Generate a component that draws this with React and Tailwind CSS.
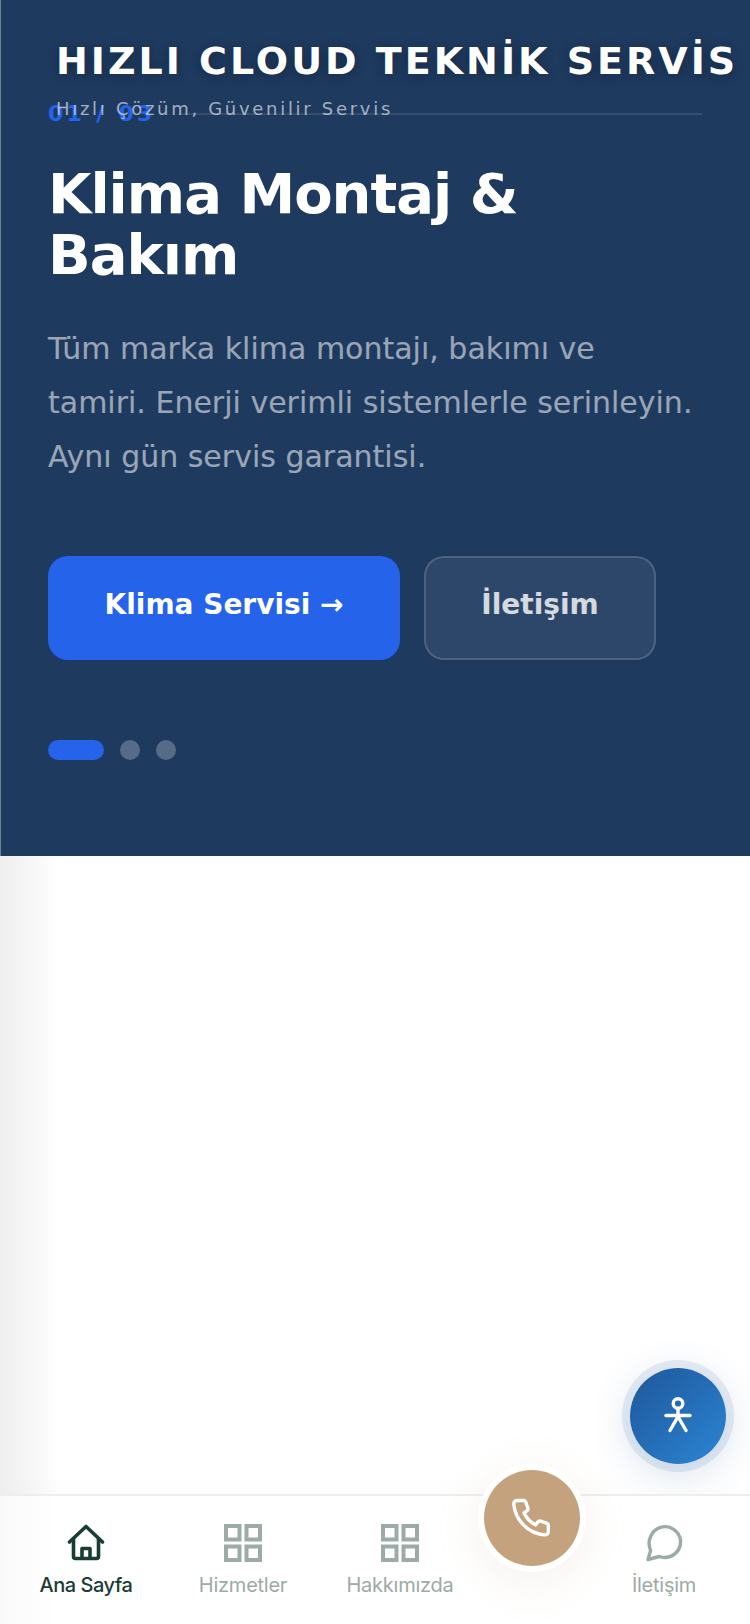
import React from "react";

const dejavu = "font-['DejaVu_Sans',sans-serif]";

function HomeIcon() {
  return (
    <svg width="38" height="38" viewBox="0 0 38 38" fill="none" stroke="#1a3c34" strokeWidth="3.600" strokeLinejoin="round" strokeLinecap="round">
      <path d="M2.500 18 19 2.500 35.500 18" />
      <path d="M6.500 15v17.500a2 2 0 0 0 2 2h21a2 2 0 0 0 2-2V15" />
      <path d="M15 34V24.500h8V34" />
    </svg>
  );
}

function GridIcon() {
  return (
    <svg width="38" height="38" viewBox="0 0 38 38" fill="none" stroke="#9caba5" strokeWidth="4">
      <rect x="2" y="2" width="13.500" height="13.500" />
      <rect x="22.500" y="2" width="13.500" height="13.500" />
      <rect x="2" y="22.500" width="13.500" height="13.500" />
      <rect x="22.500" y="22.500" width="13.500" height="13.500" />
    </svg>
  );
}

function ChatIcon() {
  return (
    <svg width="38" height="38" viewBox="0 0 38 38" fill="none" stroke="#9caba5" strokeWidth="3.400" strokeLinejoin="round">
      <path d="M3 35.500 5.600 26.400C1.600 17.500 6 6.500 15.500 3.400 25 .500 34.500 7 35.500 16.500 36.300 27.500 25.500 36.500 14.500 32.500L3 35.500Z" />
    </svg>
  );
}

function PhoneIcon() {
  return (
    <svg width="42" height="42" viewBox="0 0 42 42" fill="none" stroke="#fff" strokeWidth="3.400" strokeLinejoin="round" strokeLinecap="round">
      <path d="M6 3.500h6.500c1.200 0 2 .700 2.400 1.800l2 6c.300 1-.100 2-1 2.600l-2.800 2c2.400 5 6.500 9.400 11.500 12l2.200-2.800c.700-.900 1.700-1.200 2.700-.900l6 2c1.100.400 1.800 1.300 1.800 2.400v6c0 2-1.500 3.400-3.400 3.300C17 36.500 4 23 2.800 7.200 2.700 5 4 3.500 6 3.500Z" />
    </svg>
  );
}

function PersonIcon() {
  return (
    <svg width="28" height="38" viewBox="0 0 28 38" fill="none" stroke="#fff" strokeWidth="3.400" strokeLinecap="round">
      <circle cx="14" cy="6.500" r="4.800" />
      <path d="M2 18.500h24" />
      <path d="M14 11.500v8L6 33.500" />
      <path d="M14 19.500l8 14" />
    </svg>
  );
}

function NavItem({ icon, label, active }) {
  return (
    <div className="flex w-[150px] flex-col items-center">
      <div className="flex h-[38px] items-center justify-center">{icon}</div>
      <span className={`mt-[9px] font-['Inter',sans-serif] text-[20px] leading-[28px] ${active ? "font-medium tracking-[-0.500px] text-[#1a3c34]" : "tracking-[-0.250px] text-[#9caba5]"}`}>
        {label}
      </span>
    </div>
  );
}

export default function App() {
  return (
    <div className={`relative flex h-[1624px] w-[750px] flex-col overflow-hidden bg-white ${dejavu}`}>
      <section className="relative h-[856px] shrink-0 border-l border-l-[#6f7f95] bg-[#1e3a5f] pl-[47px]">
        {/* Brand header sits over the slide */}
        <header className="absolute left-[55px] top-[36px] whitespace-nowrap">
          <div className="text-[38px] font-bold leading-[50px] tracking-[3px] text-white [text-shadow:0_2px_12px_rgba(0,0,0,0.3)]">
            HIZLI CLOUD TEKNİK SERVİS
          </div>
          <div className="mt-[12px] text-[18px] leading-[22px] tracking-[2.700px] text-white/60">
            Hızlı Çözüm, Güvenilir Servis
          </div>
        </header>

        <div className="flex items-center gap-[22px] pr-[48px] pt-[100px]">
          <span className="text-[22px] font-bold leading-[28px] tracking-[3.300px] text-[#2563eb]">
            01 / 03
          </span>
          <div className="h-[2px] flex-1 bg-white/10" />
        </div>

        <h1 className="mt-[35px] text-[56px] font-bold leading-[61px] tracking-[-1px] text-white">
          Klima Montaj &amp;<br />Bakım
        </h1>

        <p className="mt-[37px] w-[650px] text-[30px] leading-[54px] text-white/55">
          Tüm marka klima montajı, bakımı ve tamiri. Enerji verimli sistemlerle serinleyin. Aynı gün servis garantisi.
        </p>

        <div className="mt-[72px] flex gap-[24px]">
          <div className="h-[104px] w-[352px] rounded-[20px] bg-[#2563eb] pt-[32px] text-center text-[28px] font-bold leading-[34px] text-white">
            Klima Servisi →
          </div>
          <div className="h-[104px] w-[232px] rounded-[20px] border-2 border-white/15 bg-white/7 pt-[30px] text-center text-[28px] font-bold leading-[34px] text-white/80">
            İletişim
          </div>
        </div>

        <div className="mt-[80px] flex gap-[16px]">
          <span className="h-[20px] w-[56px] rounded-full bg-[#2563eb]" />
          <span className="h-[20px] w-[20px] rounded-full bg-white/25" />
          <span className="h-[20px] w-[20px] rounded-full bg-white/25" />
        </div>
      </section>

      <main className="flex-1 bg-gradient-to-r from-[#eeeeee] to-white to-[60px]" />

      {/* Floating accessibility button */}
      <button className="absolute left-[630px] top-[1368px] flex h-[96px] w-[96px] items-center justify-center rounded-full bg-gradient-to-br from-[#1e5799] to-[#2b85d6] shadow-[0_0_0_8px_rgba(30,87,153,0.1),0_8px_40px_rgba(30,87,153,0.2)]">
        <PersonIcon />
      </button>

      {/* Bottom tab bar */}
      <nav className="absolute bottom-0 left-0 flex h-[130px] w-[750px] border-t-2 border-t-[#eeeeee] bg-white/70 pl-[11px] pt-[28px] shadow-[0_-10px_20px_rgba(0,0,0,0.01)]">
        <NavItem icon={<HomeIcon />} label="Ana Sayfa" active />
        <div className="ml-[7px]"><NavItem icon={<GridIcon />} label="Hizmetler" /></div>
        <div className="ml-[7px]"><NavItem icon={<GridIcon />} label="Hakkımızda" /></div>
        <div className="ml-[114px]"><NavItem icon={<ChatIcon />} label="İletişim" /></div>
      </nav>

      {/* Call button overlapping the tab bar */}
      <button className="absolute left-[484px] top-[1470px] flex h-[96px] w-[96px] items-center justify-center rounded-full bg-[#c4a27d] shadow-[0_0_0_6px_#ffffff,0_10px_50px_rgba(196,162,125,0.2)]">
        <PhoneIcon />
      </button>
    </div>
  );
}
